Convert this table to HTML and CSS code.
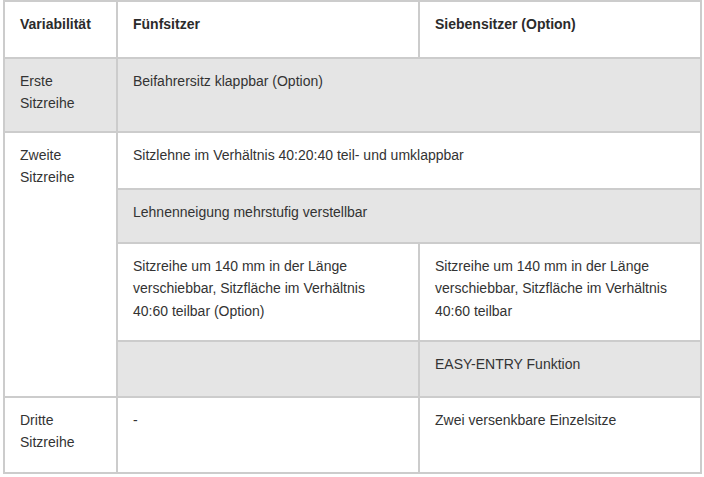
FILE: index.html
```html
<!DOCTYPE html>
<html lang="de">
<head>
<meta charset="utf-8">
<link rel="stylesheet" href="styles.css">
</head>
<body>
<div class="table">
  <div class="cell head">Variabilität</div>
  <div class="cell head">Fünfsitzer</div>
  <div class="cell head">Siebensitzer (Option)</div>

  <div class="cell gray">Erste<br>Sitzreihe</div>
  <div class="cell gray span2">Beifahrersitz klappbar (Option)</div>

  <div class="cell rowspan4">Zweite<br>Sitzreihe</div>
  <div class="cell span2">Sitzlehne im Verhältnis 40:20:40 teil- und umklappbar</div>
  <div class="cell gray span2">Lehnenneigung mehrstufig verstellbar</div>
  <div class="cell">Sitzreihe um 140 mm in der Länge verschiebbar, Sitzfläche im Verhältnis 40:60 teilbar (Option)</div>
  <div class="cell">Sitzreihe um 140 mm in der Länge verschiebbar, Sitzfläche im Verhältnis 40:60 teilbar</div>
  <div class="cell gray"></div>
  <div class="cell gray">EASY-ENTRY Funktion</div>

  <div class="cell">Dritte<br>Sitzreihe</div>
  <div class="cell">-</div>
  <div class="cell">Zwei versenkbare Einzelsitze</div>
</div>
</body>
</html>
```

FILE: styles.css
```css
html, body {
  margin: 0;
  padding: 0;
  background: #ffffff;
}

body {
  padding: 0 0 0 3px;
  font-family: "Liberation Sans", Arial, sans-serif;
  font-size: 14px;
  color: #333333;
}

.table {
  display: grid;
  width: 695px;
  grid-template-columns: 111px 300px 280px;
  grid-template-rows: 55px 72px 55px 52px 96px 54px 74px;
  gap: 2px;
  padding: 2px;
  background: #cccccc;
}

.cell {
  background: #ffffff;
  padding: 11px 15px 0 15px;
  line-height: 22.4px;
}

.cell.head {
  font-weight: bold;
  color: #2b2b2b;
}

.cell.gray {
  background: #e5e5e5;
}

.span2 {
  grid-column: span 2;
}

.rowspan4 {
  grid-row: span 4;
}
```
